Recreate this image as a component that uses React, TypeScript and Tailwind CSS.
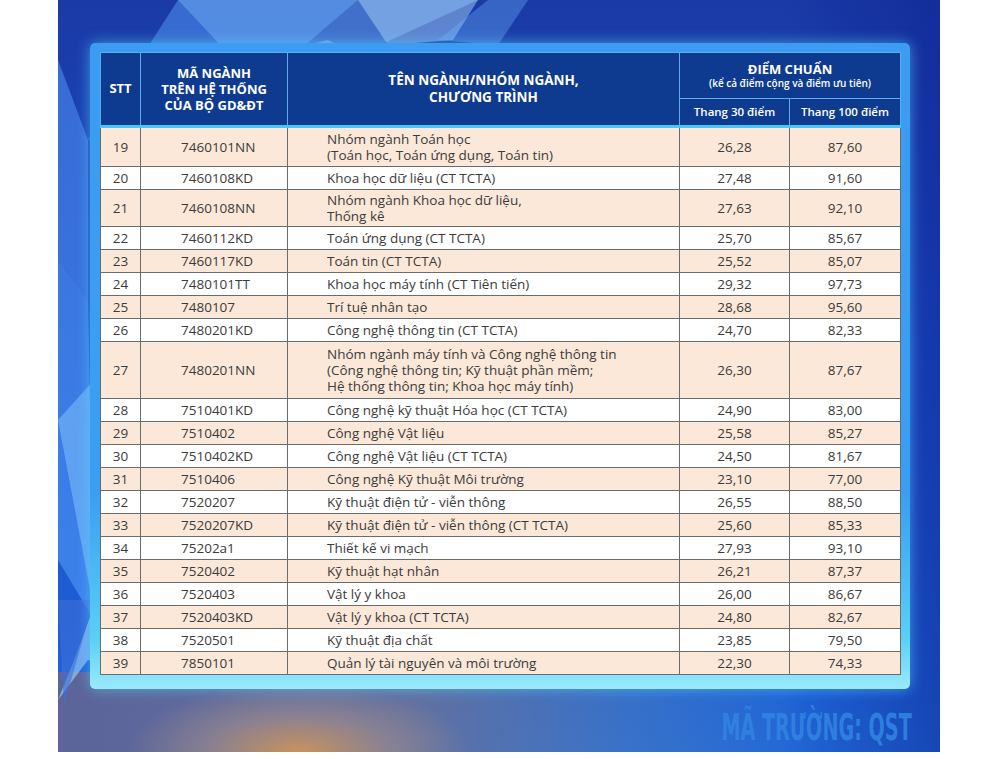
import React from 'react';

type Row = {
  stt: number;
  code: string;
  name: string[];
  s30: string;
  s100: string;
  h: string;
};

const rows: Row[] = [
  { stt: 19, code: '7460101NN', name: ['Nhóm ngành Toán học', '(Toán học, Toán ứng dụng, Toán tin)'], s30: '26,28', s100: '87,60', h: 'h-[40px]' },
  { stt: 20, code: '7460108KD', name: ['Khoa học dữ liệu (CT TCTA)'], s30: '27,48', s100: '91,60', h: 'h-[23px]' },
  { stt: 21, code: '7460108NN', name: ['Nhóm ngành Khoa học dữ liệu,', 'Thống kê'], s30: '27,63', s100: '92,10', h: 'h-[37px]' },
  { stt: 22, code: '7460112KD', name: ['Toán ứng dụng (CT TCTA)'], s30: '25,70', s100: '85,67', h: 'h-[23px]' },
  { stt: 23, code: '7460117KD', name: ['Toán tin (CT TCTA)'], s30: '25,52', s100: '85,07', h: 'h-[23px]' },
  { stt: 24, code: '7480101TT', name: ['Khoa học máy tính (CT Tiên tiến)'], s30: '29,32', s100: '97,73', h: 'h-[23px]' },
  { stt: 25, code: '7480107', name: ['Trí tuệ nhân tạo'], s30: '28,68', s100: '95,60', h: 'h-[23px]' },
  { stt: 26, code: '7480201KD', name: ['Công nghệ thông tin (CT TCTA)'], s30: '24,70', s100: '82,33', h: 'h-[23px]' },
  {
    stt: 27,
    code: '7480201NN',
    name: [
      'Nhóm ngành máy tính và Công nghệ thông tin',
      '(Công nghệ thông tin; Kỹ thuật phần mềm;',
      'Hệ thống thông tin; Khoa học máy tính)',
    ],
    s30: '26,30',
    s100: '87,67',
    h: 'h-[57px]',
  },
  { stt: 28, code: '7510401KD', name: ['Công nghệ kỹ thuật Hóa học (CT TCTA)'], s30: '24,90', s100: '83,00', h: 'h-[23px]' },
  { stt: 29, code: '7510402', name: ['Công nghệ Vật liệu'], s30: '25,58', s100: '85,27', h: 'h-[23px]' },
  { stt: 30, code: '7510402KD', name: ['Công nghệ Vật liệu (CT TCTA)'], s30: '24,50', s100: '81,67', h: 'h-[23px]' },
  { stt: 31, code: '7510406', name: ['Công nghệ Kỹ thuật Môi trường'], s30: '23,10', s100: '77,00', h: 'h-[23px]' },
  { stt: 32, code: '7520207', name: ['Kỹ thuật điện tử - viễn thông'], s30: '26,55', s100: '88,50', h: 'h-[23px]' },
  { stt: 33, code: '7520207KD', name: ['Kỹ thuật điện tử - viễn thông (CT TCTA)'], s30: '25,60', s100: '85,33', h: 'h-[23px]' },
  { stt: 34, code: '75202a1', name: ['Thiết kế vi mạch'], s30: '27,93', s100: '93,10', h: 'h-[23px]' },
  { stt: 35, code: '7520402', name: ['Kỹ thuật hạt nhân'], s30: '26,21', s100: '87,37', h: 'h-[23px]' },
  { stt: 36, code: '7520403', name: ['Vật lý y khoa'], s30: '26,00', s100: '86,67', h: 'h-[23px]' },
  { stt: 37, code: '7520403KD', name: ['Vật lý y khoa (CT TCTA)'], s30: '24,80', s100: '82,67', h: 'h-[23px]' },
  { stt: 38, code: '7520501', name: ['Kỹ thuật địa chất'], s30: '23,85', s100: '79,50', h: 'h-[23px]' },
  { stt: 39, code: '7850101', name: ['Quản lý tài nguyên và môi trường'], s30: '22,30', s100: '74,33', h: 'h-[23px]' },
];

// crystal facets behind the frame
const Crystals = () => (
  <svg className="absolute inset-0 pointer-events-none" width="882" height="752" viewBox="0 0 882 752">
    <polygon points="30,140 120,0 300,0 200,85" fill="#5aa6ff" opacity="0.45" />
    <polygon points="120,0 420,0 300,55 200,85" fill="#7cc0ff" opacity="0.4" />
    <polygon points="300,0 420,0 395,40 330,45" fill="#b4defe" opacity="0.45" />
    <polygon points="200,85 300,55 270,40 140,70" fill="#a8d8ff" opacity="0.4" />
    <polygon points="380,40 430,0 470,0 440,45" fill="#6fb6ff" opacity="0.35" />
    <polygon points="0,60 30,140 30,300 0,260" fill="#4d8cf0" opacity="0.6" />
    <polygon points="0,260 30,300 36,620 0,560" fill="#5aa6ff" opacity="0.5" />
    <polygon points="0,420 36,380 34,600" fill="#8fd0ff" opacity="0.45" />
    <polygon points="0,700 30,660 110,685 55,655 38,600 20,650" fill="#b0e2ff" opacity="0.55" />
    <polygon points="0,600 36,600 6,705" fill="#3e6ed8" opacity="0.6" />
  </svg>
);

const App = () => {
  return (
    <div className="w-[1000px] h-[759px] bg-white overflow-hidden font-['Open_Sans',sans-serif]">
      <div className="relative ml-[58px] w-[882px] h-[752px] overflow-hidden bg-[linear-gradient(180deg,#1a3aa6_0%,#1c4cc6_45%,#1d5fd6_85%,#2168d8_100%)]">
        <div className="absolute left-0 bottom-0 w-full h-[80px] bg-[radial-gradient(ellipse_170px_70px_at_240px_80px,rgba(205,148,90,0.95),rgba(160,140,140,0.6)_55%,transparent_100%),linear-gradient(90deg,rgba(95,100,150,0.95)_0%,rgba(110,115,150,0.85)_40%,rgba(90,130,180,0.4)_65%,transparent_85%)]" />
        <div className="absolute inset-0 bg-[linear-gradient(90deg,transparent_82%,rgba(10,30,140,0.45)_100%)]" />
        <Crystals />

        <div className="relative pt-[43px] pl-[32px]">
          <div className="w-[820px] rounded-[5px] pt-[9px] pb-[14px] px-[10px] bg-[linear-gradient(180deg,#3b9cf2_0%,#3a9ff2_70%,#58d0f6_92%,#9aeafb_100%)] shadow-[0_0_14px_rgba(90,210,255,0.6)]">
            <table className="w-[800px] table-fixed border-collapse">
              <colgroup>
                <col className="w-[40px]" />
                <col className="w-[147px]" />
                <col className="w-[392px]" />
                <col className="w-[110px]" />
                <col className="w-[111px]" />
              </colgroup>
              <thead className="bg-[#0e3b8f] text-white">
                <tr className="h-[46px]">
                  <th rowSpan={2} className="border border-[#5aaeea] border-b-[3px] border-b-[#4bc6f2] text-[13px] font-bold">
                    STT
                  </th>
                  <th rowSpan={2} className="border border-[#5aaeea] border-b-[3px] border-b-[#4bc6f2] text-[13px] font-bold leading-[16px]">
                    MÃ NGÀNH
                    <br />
                    TRÊN HỆ THỐNG
                    <br />
                    CỦA BỘ GD&amp;ĐT
                  </th>
                  <th rowSpan={2} className="border border-[#5aaeea] border-b-[3px] border-b-[#4bc6f2] text-[13.5px] font-bold leading-[17px]">
                    TÊN NGÀNH/NHÓM NGÀNH,
                    <br />
                    CHƯƠNG TRÌNH
                  </th>
                  <th colSpan={2} className="border border-[#5aaeea] leading-[14px]">
                    <div className="text-[13px] font-bold">ĐIỂM CHUẨN</div>
                    <div className="text-[10px] font-semibold">(kể cả điểm cộng và điểm ưu tiên)</div>
                  </th>
                </tr>
                <tr className="h-[28px]">
                  <th className="border border-[#5aaeea] border-b-[3px] border-b-[#4bc6f2] text-[11.5px] font-semibold">Thang 30 điểm</th>
                  <th className="border border-[#5aaeea] border-b-[3px] border-b-[#4bc6f2] text-[11.5px] font-semibold">Thang 100 điểm</th>
                </tr>
              </thead>
              <tbody className="text-[13.5px] text-[#3b3b3b] leading-4">
                {rows.map((r) => (
                  <tr key={r.stt} className={`${r.h} ${r.stt % 2 === 1 ? 'bg-[#fce8d8]' : 'bg-white'}`}>
                    <td className="border border-[#6b6b6b] text-center">{r.stt}</td>
                    <td className="border border-[#6b6b6b] pl-[40px]">{r.code}</td>
                    <td className="border border-[#6b6b6b] pl-[39px]">
                      {r.name.map((n) => (
                        <div key={n}>{n}</div>
                      ))}
                    </td>
                    <td className="border border-[#6b6b6b] text-center">{r.s30}</td>
                    <td className="border border-[#6b6b6b] text-center">{r.s100}</td>
                  </tr>
                ))}
              </tbody>
            </table>
          </div>
        </div>

        <div className="relative flex justify-end pr-[28px] mt-[18px]">
          <span className="origin-right scale-x-[0.56] text-[38px] leading-[40px] font-bold text-[#3183e2] opacity-90 whitespace-nowrap font-['DejaVu_Sans_Condensed','DejaVu_Sans',sans-serif]">
            MÃ TRƯỜNG: QST
          </span>
        </div>
      </div>
    </div>
  );
};

export default App;
